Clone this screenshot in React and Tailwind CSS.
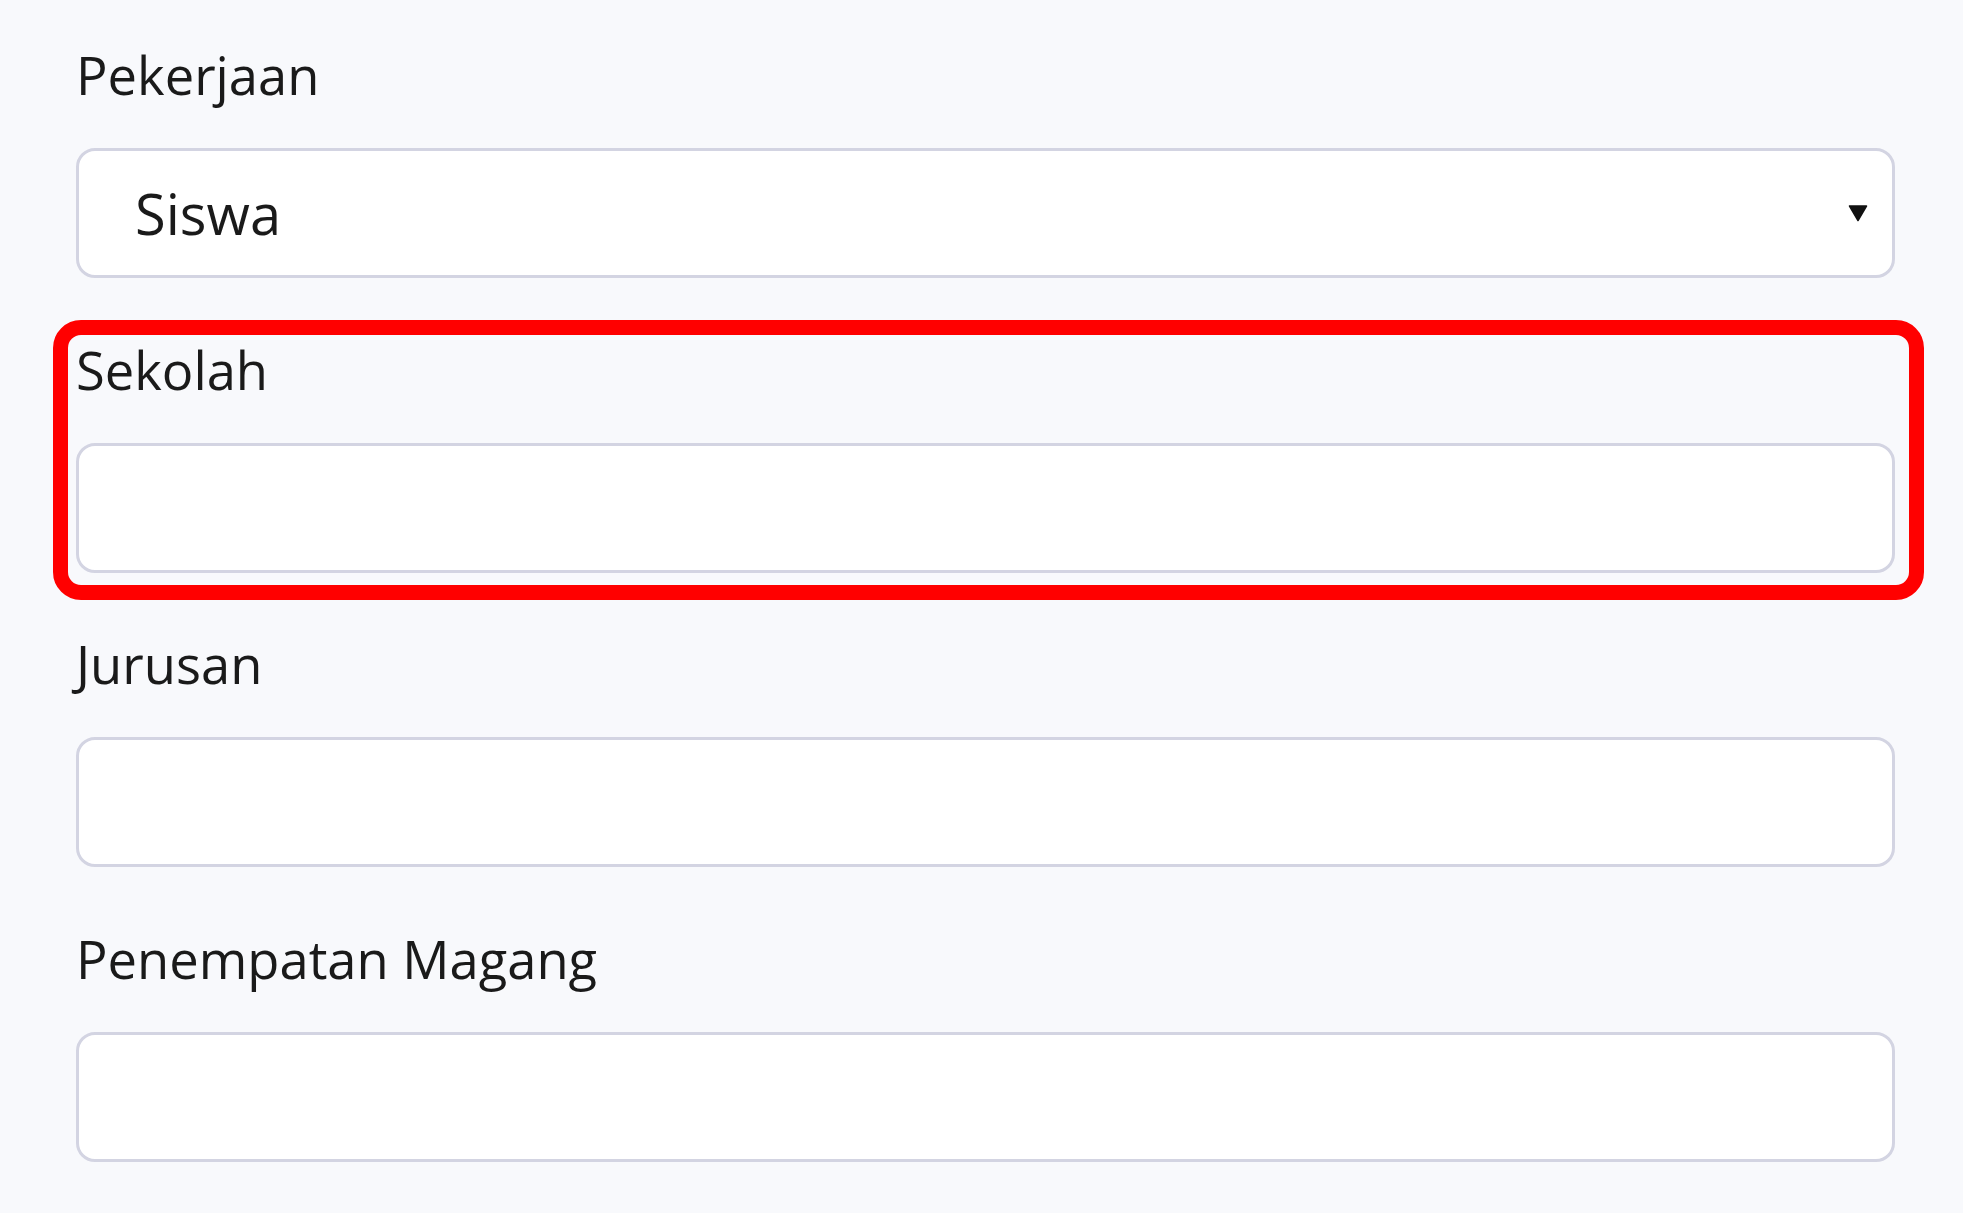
import React from "react";

function Label({ children }) {
  return (
    <div className="text-[52.5px] leading-[81px] text-[#1a1a1a] mb-[33px]">{children}</div>
  );
}

function Field({ label, children }) {
  return (
    <div className="mb-[50.5px]">
      <Label>{label}</Label>
      {children}
    </div>
  );
}

function Box({ children }) {
  return (
    <div className="h-[130px] w-full bg-white border-[3px] border-[#d3d4e2] rounded-[19px] flex items-center relative">
      {children}
    </div>
  );
}

export default function App() {
  return (
    <div
      className="min-h-[1213px] w-full bg-[#f8f9fc] pt-[34px] pl-[76px] pr-[68px]"
      style={{ fontFamily: "'Open Sans', 'Noto Sans', sans-serif" }}
    >
      <Field label="Pekerjaan">
        <Box>
          <span className="pl-[56px] text-[56px] text-[#1a1a1a]">Siswa</span>
          <svg
            className="absolute right-[24px] top-1/2 -translate-y-1/2"
            width="20"
            height="20"
            viewBox="0 0 20 20"
          >
            <path d="M1.5 3 L18.5 3 L10 17.5 Z" fill="#111" stroke="#111" strokeWidth="1.5" strokeLinejoin="round" />
          </svg>
        </Box>
      </Field>

      <div className="relative">
        <div className="absolute left-[-23px] right-[-29px] top-[-9px] bottom-[-27px] border-[15px] border-[#ff0000] rounded-[28px] pointer-events-none" />
        <Field label="Sekolah">
          <Box />
        </Field>
      </div>

      <Field label="Jurusan">
        <Box />
      </Field>

      <Field label="Penempatan Magang">
        <Box />
      </Field>
    </div>
  );
}
